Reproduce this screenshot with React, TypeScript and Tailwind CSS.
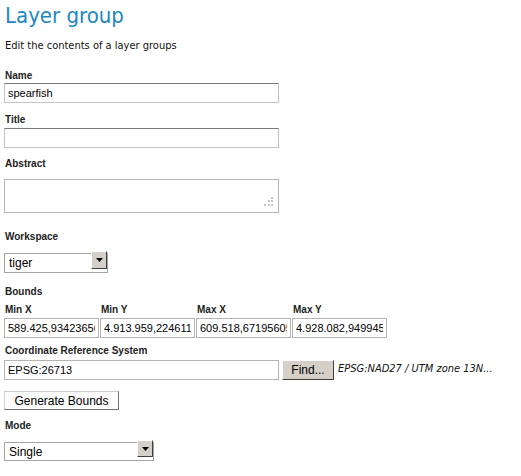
import React from "react";

const label = "block h-[13px] leading-[13px] text-[10px] font-bold text-[#222] pl-px font-['Liberation_Sans',Arial,sans-serif]";
const field = "block h-[20px] border border-[#b4b4b4] px-[3px] text-[11px] outline-none font-['Liberation_Sans',Arial,sans-serif]";

function Select({ w, value, h }: { w: string; value: string; h: string }) {
  return (
    <div className={`relative ${w} ${h}`}>
      <select
        className="appearance-none w-full h-full border border-[#a5a5a5] bg-white pl-[4px] text-[12px] text-black outline-none font-['Liberation_Sans',Arial,sans-serif]"
        defaultValue={value}
      >
        <option>{value}</option>
      </select>
      <div className="pointer-events-none absolute right-px top-px bottom-px w-[16px] bg-[#d4d0c8] border border-t-white border-l-white border-r-[#404040] border-b-[#404040] flex items-center justify-center">
        <svg width="7" height="4" viewBox="0 0 7 4">
          <path d="M0 0h7L3.5 4z" fill="#000" />
        </svg>
      </div>
    </div>
  );
}

export default function App() {
  return (
    <div className="bg-white w-[521px] h-[476px] pl-[4px] pt-[3px] text-black font-['DejaVu_Sans_Condensed','DejaVu_Sans',sans-serif]">
      <h1 className="h-[26px] leading-[26px] text-[22px] text-[#2387c0] pl-px font-normal">Layer group</h1>
      <p className="mt-[10px] h-[14px] leading-[14px] text-[11px] pl-px text-[#111]">Edit the contents of a layer groups</p>

      <label className={`${label} mt-[16px]`}>Name</label>
      <input className={`${field} mt-px w-[275px] border-[#c3c3c3] border-t-[#7a7a7a]`} defaultValue="spearfish" />

      <label className={`${label} mt-[10px]`}>Title</label>
      <input className={`${field} mt-[2px] w-[275px] border-[#c3c3c3] border-t-[#7a7a7a]`} defaultValue="" />

      <label className={`${label} mt-[9px]`}>Abstract</label>
      <div className="relative mt-[9px] w-[275px] h-[34px]">
        <textarea className="block w-full h-full resize-none border border-[#b4b4b4] outline-none" />
        <svg className="pointer-events-none absolute right-[6px] bottom-[7px]" width="9" height="9" viewBox="0 0 9 9">
          <g fill="#c4c4c4">
            <rect x="7" y="0" width="2" height="2" />
            <rect x="4" y="3" width="2" height="2" />
            <rect x="7" y="3" width="2" height="2" />
            <rect x="0" y="7" width="2" height="2" />
            <rect x="4" y="7" width="2" height="2" />
            <rect x="7" y="7" width="2" height="2" />
          </g>
        </svg>
      </div>

      <label className={`${label} mt-[17px]`}>Workspace</label>
      <div className="mt-[7px]">
        <Select w="w-[104px]" h="h-[20px]" value="tiger" />
      </div>

      <label className={`${label} mt-[15px]`}>Bounds</label>
      <div className="mt-[5px] grid grid-cols-[95px_95px_95px_95px] gap-x-px">
        {[
          ["Min X", "589.425,93423656"],
          ["Min Y", "4.913.959,2246113"],
          ["Max X", "609.518,67195605"],
          ["Max Y", "4.928.082,949945"],
        ].map(([l, v]) => (
          <div key={l} className="flex flex-col">
            <span className={label}>{l}</span>
            <input className={`${field} mt-[2px] w-[95px]`} defaultValue={v} />
          </div>
        ))}
      </div>

      <label className={`${label} mt-[6px]`}>Coordinate Reference System</label>
      <div className="mt-[3px] flex items-center h-[19px]">
        <input className={`${field} w-[275px] h-[19px]`} defaultValue="EPSG:26713" />
        <button className="ml-[3px] w-[52px] h-[20px] bg-[#d4d0c8] border border-t-white border-l-white border-r-[#404040] border-b-[#404040] text-[12px] leading-none text-black font-['Liberation_Sans',Arial,sans-serif]">
          Find...
        </button>
        <span className="ml-[4px] text-[11px] italic text-[#111]">EPSG:NAD27 / UTM zone 13N...</span>
      </div>

      <button className="mt-[12px] block w-[115px] h-[19px] bg-[#fcfcfc] border border-t-[#cfcfcf] border-l-[#cfcfcf] border-r-[#6f6f6f] border-b-[#6f6f6f] text-[12px] leading-none text-black font-['Liberation_Sans',Arial,sans-serif]">
        Generate Bounds
      </button>

      <label className={`${label} mt-[9px]`}>Mode</label>
      <div className="mt-[7px]">
        <Select w="w-[150px]" h="h-[19px]" value="Single" />
      </div>
    </div>
  );
}
